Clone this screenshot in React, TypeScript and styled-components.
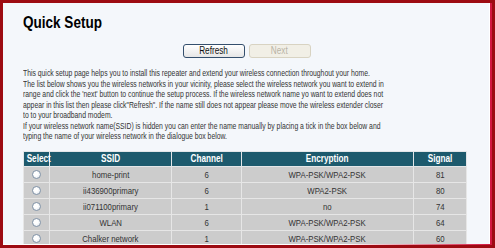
import React from 'react'
import styled, { createGlobalStyle } from 'styled-components';

type Network = {
  ssid: string;
  channel: number;
  encryption: string;
  signal: number;
};

const networks: Network[] = [
  { ssid: 'home-print', channel: 6, encryption: 'WPA-PSK/WPA2-PSK', signal: 81 },
  { ssid: 'ii436900primary', channel: 6, encryption: 'WPA2-PSK', signal: 80 },
  { ssid: 'ii071100primary', channel: 1, encryption: 'no', signal: 74 },
  { ssid: 'WLAN', channel: 6, encryption: 'WPA-PSK/WPA2-PSK', signal: 64 },
  { ssid: 'Chalker network', channel: 1, encryption: 'WPA-PSK/WPA2-PSK', signal: 60 },
];

const introLines = [
  'This quick setup page helps you to install this repeater and extend your wireless connection throughout your home.',
  'The list below shows you the wireless networks in your vicinity, please select the wireless network you want to extend in',
  "range and click the 'next' button to continue the setup process. If the wireless network name yo want to extend does not",
  'appear in this list then please click"Refresh". If the name still does not appear please move the wireless extender closer',
  'to to your broadband modem.',
  'If your wireless network name(SSID) is hidden you can enter the name manually by placing a tick in the box below and',
  'typing the name of your wireless network in the dialogue box below.',
];

// the UI font is a narrow sans; Arial metrics squeezed to match
const FONT = `"Liberation Sans", Arial, sans-serif`;
const NARROW = 0.82;

const App: React.FC = () => {
  return (
    <>
      <GlobalStyle />
      <FRAME>
        <PAGE>
          <TITLE><NARROWTEXT $origin="left">Quick Setup</NARROWTEXT></TITLE>
          <BUTTONS>
            <BUTTON type="button"><NARROWTEXT>Refresh</NARROWTEXT></BUTTON>
            <BUTTON type="button" disabled><NARROWTEXT>Next</NARROWTEXT></BUTTON>
          </BUTTONS>
          <INTRO>
            {introLines.map((line, index) => (
              <INTROLINE key={index}>{line}</INTROLINE>
            ))}
          </INTRO>
          <TABLE>
            <colgroup>
              <col style={{ width: 26 }} />
              <col style={{ width: 122 }} />
              <col style={{ width: 70 }} />
              <col style={{ width: 172 }} />
              <col style={{ width: 53 }} />
            </colgroup>
            <thead>
              <tr>
                <TH><NARROWTEXT>Select</NARROWTEXT></TH>
                <TH><NARROWTEXT>SSID</NARROWTEXT></TH>
                <TH><NARROWTEXT>Channel</NARROWTEXT></TH>
                <TH><NARROWTEXT>Encryption</NARROWTEXT></TH>
                <TH><NARROWTEXT>Signal</NARROWTEXT></TH>
              </tr>
            </thead>
            <tbody>
              {networks.map((net, index) => (
                <tr key={index}>
                  <TD><RADIO /></TD>
                  <TD><NARROWTEXT>{net.ssid}</NARROWTEXT></TD>
                  <TD><NARROWTEXT>{net.channel}</NARROWTEXT></TD>
                  <TD><NARROWTEXT>{net.encryption}</NARROWTEXT></TD>
                  <TD><NARROWTEXT>{net.signal}</NARROWTEXT></TD>
                </tr>
              ))}
            </tbody>
          </TABLE>
        </PAGE>
      </FRAME>
    </>
  )
}

const GlobalStyle = createGlobalStyle`
  html, body {
    margin: 0;
    padding: 0;
    width: 495px;
    height: 248px;
    overflow: hidden;
  }
  body {
    font-family: ${FONT};
  }
`;

const FRAME = styled.div`
  box-sizing: border-box;
  width: 495px;
  height: 248px;
  padding: 3px;
  background: #9d0b12;
  display: flex;
`;

const PAGE = styled.div`
  flex: 1;
  min-width: 0;
  box-sizing: border-box;
  padding-left: 20px;
  background: #f4f7fb;
  border-right: 2px solid #d2173f;
  border-bottom: 1px solid #d2173f;
  border-image: linear-gradient(to right, #ffffff 70%, #d2173f 100%) 1;
  box-shadow: inset -1px 0 #ffffff;
  overflow: hidden;
`;

const NARROWTEXT = styled.span<{ $origin?: string }>`
  display: inline-block;
  white-space: nowrap;
  transform: scaleX(${NARROW});
  transform-origin: ${p => p.$origin ?? 'center'};
`;

const TITLE = styled.h1`
  margin: 9px 0 0;
  font-size: 16.5px;
  line-height: 20px;
  font-weight: bold;
  color: #000;
`;

const BUTTONS = styled.div`
  display: flex;
  justify-content: center;
  gap: 4px;
  margin-top: 12px;
  padding-right: 20px;
`;

const BUTTON = styled.button`
  box-sizing: border-box;
  width: 62px;
  height: 14px;
  padding: 0;
  font-family: ${FONT};
  font-size: 10px;
  line-height: 12px;
  color: #111;
  border: 1px solid #344f6d;
  border-radius: 3px;
  background: linear-gradient(#ffffff, #e6e6e6);

  &:disabled {
    color: #b9b4a6;
    border-color: #d8d3c2;
    background: #f1efe6;
  }
`;

const INTRO = styled.div`
  margin: 10px 0 0;
  font-size: 8.7px;
  line-height: 10.5px;
  color: #333;
`;

const INTROLINE = styled.div`
  white-space: nowrap;
  transform: scaleX(0.785);
  transform-origin: left;
`;

const TABLE = styled.table`
  margin-top: 9px;
  width: 443px;
  table-layout: fixed;
  border-collapse: collapse;
`;

const TH = styled.th`
  height: 14px;
  padding: 0;
  background: #1d5a6d;
  color: #fff;
  font-size: 10px;
  line-height: 12px;
  font-weight: bold;
  text-align: center;
  border: 1px solid #e3e6e8;
`;

const TD = styled.td`
  height: 15px;
  padding: 0;
  background: #cccccc;
  color: #333;
  font-size: 9.5px;
  line-height: 11px;
  text-align: center;
  border: 1px solid #e6e6e6;
`;

const RADIO = styled.span`
  display: inline-block;
  box-sizing: border-box;
  width: 9px;
  height: 9px;
  border-radius: 50%;
  border: 1px solid #7d8fa3;
  background: radial-gradient(circle at 40% 40%, #ffffff 30%, #dfe5ec 100%);
  vertical-align: middle;
`;

export default App
